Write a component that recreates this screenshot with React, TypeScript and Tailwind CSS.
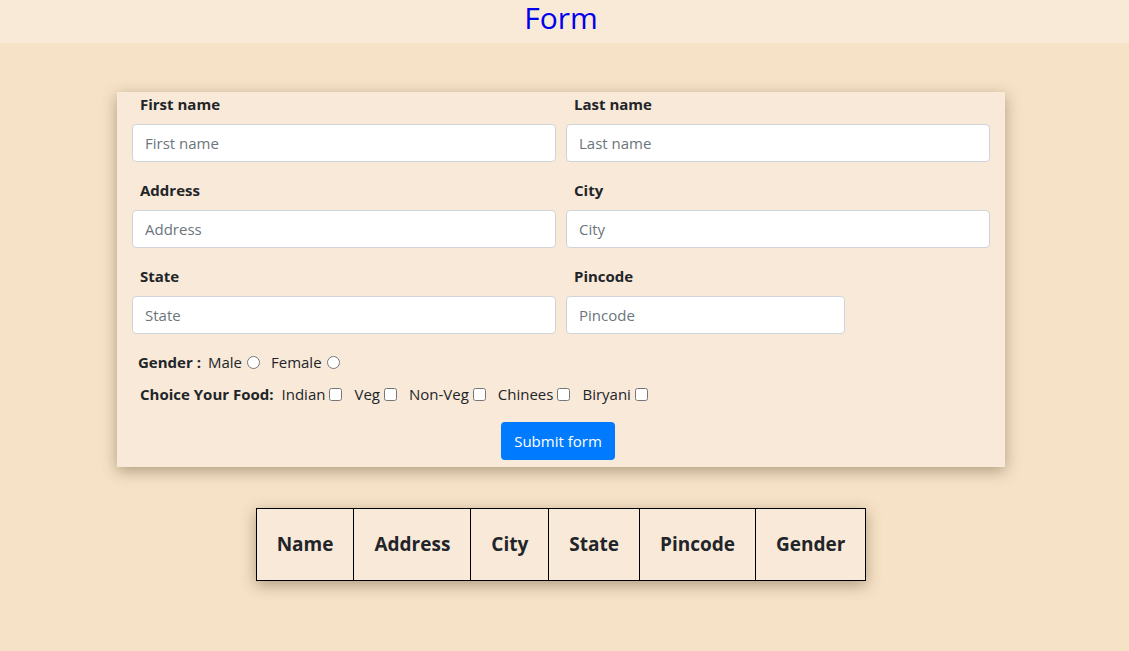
type FieldProps = {
  label: string;
  narrow?: boolean;
};

function Field({ label, narrow }: FieldProps) {
  return (
    <div className="flex flex-col">
      <label className="ml-2 mb-[10px] mt-[2px] text-[15px] font-bold leading-[20px] text-[#212529]">
        {label}
      </label>
      <input
        placeholder={label}
        className={`h-[38px] rounded-[4px] border border-[#ced4da] bg-white px-3 text-[15px] text-[#495057] placeholder:text-[#6c757d] outline-none ${
          narrow ? "w-[279px]" : "w-full"
        }`}
      />
    </div>
  );
}

const foods = ["Indian", "Veg", "Non-Veg", "Chinees", "Biryani"];
const columns = ["Name", "Address", "City", "State", "Pincode", "Gender"];

export default function App() {
  return (
    <div
      className="min-h-[651px] bg-[#f6e2c7] text-[#212529]"
      style={{ fontFamily: '"Open Sans", "Noto Sans", sans-serif' }}
    >
      <header className="flex h-[43px] items-center justify-center bg-[#f9e9d7] pb-[8px] pr-[7px]">
        <h1 className="text-[30px] font-medium leading-[38px] text-[#0000ee]">Form</h1>
      </header>

      <div className="flex flex-col items-center pr-[7px]">
        <form className="mt-[49px] w-[888px] bg-[#f9e9d8] px-[15px] pb-[7px] shadow-[0_4px_14px_rgba(90,70,40,0.45)]">
          <div className="grid grid-cols-2 gap-x-[10px] gap-y-[16px]">
            <Field label="First name" />
            <Field label="Last name" />
            <Field label="Address" />
            <Field label="City" />
            <Field label="State" />
            <Field label="Pincode" narrow />
          </div>

          <div className="mt-[17px] flex items-center pl-[6px] text-[15px] leading-[22px]">
            <span className="mr-[7px] font-bold">Gender :</span>
            <span>Male</span>
            <input type="radio" name="gender" className="ml-[5px] mr-[11px] h-[13px] w-[13px]" />
            <span>Female</span>
            <input type="radio" name="gender" className="ml-[5px] h-[13px] w-[13px]" />
          </div>

          <div className="mt-[10px] flex items-center pl-[8px] text-[15px] leading-[22px]">
            <span className="mr-[8px] font-bold">Choice Your Food:</span>
            {foods.map((f) => (
              <span key={f} className="mr-[12px] flex items-center">
                <span>{f}</span>
                <input type="checkbox" className="ml-[4px] h-[13px] w-[13px]" />
              </span>
            ))}
          </div>

          <div className="mt-[17px] flex justify-center pr-[6px]">
            <button
              type="button"
              className="h-[38px] rounded-[4px] bg-[#007bff] px-[13px] text-[15px] text-white"
            >
              Submit form
            </button>
          </div>
        </form>

        <table className="mt-[41px] border-collapse border border-black bg-[#f9e9d8] shadow-[0_4px_14px_rgba(90,70,40,0.45)]">
          <thead>
            <tr className="h-[72px]">
              {columns.map((c) => (
                <th key={c} className="border border-black px-[20px] text-[19px] font-bold">
                  {c}
                </th>
              ))}
            </tr>
          </thead>
        </table>
      </div>
    </div>
  );
}
